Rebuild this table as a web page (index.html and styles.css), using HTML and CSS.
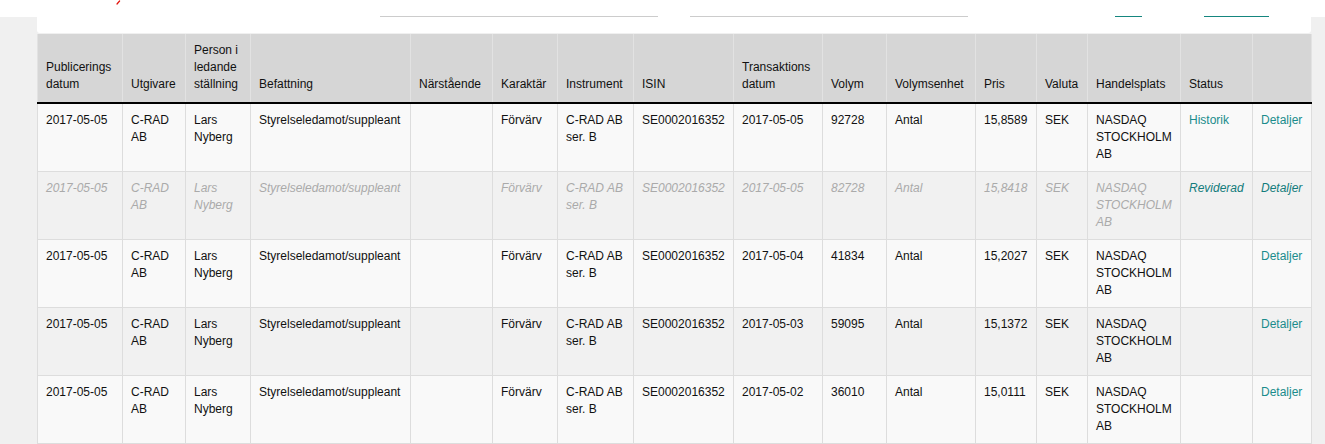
FILE: index.html
```html
<!DOCTYPE html>
<html lang="sv">
<head>
<meta charset="utf-8">
<title>Insynshandel</title>
<link rel="stylesheet" href="styles.css">
</head>
<body>
<div class="topbar">
  <svg class="logo-tick" width="5" height="5" viewBox="0 0 5 5"><path d="M1 4 L3.6 1" stroke="#e3120b" stroke-width="1.2" stroke-linecap="round"/></svg>
</div>
<main class="page">
  <div class="panel">
    <span class="field"></span>
    <span class="field field-2"></span>
    <span class="btn btn-small"></span>
    <span class="btn btn-wide"></span>
  </div>
  <table class="grid">
    <colgroup>
      <col class="c1"><col class="c2"><col class="c3"><col class="c4"><col class="c5"><col class="c6"><col class="c7"><col class="c8"><col class="c9"><col class="c10"><col class="c11"><col class="c12"><col class="c13"><col class="c14"><col class="c15"><col class="c16">
    </colgroup>
    <thead>
      <tr>
        <th>Publicerings datum</th>
        <th>Utgivare</th>
        <th>Person i ledande ställning</th>
        <th>Befattning</th>
        <th>Närstående</th>
        <th>Karaktär</th>
        <th>Instrument</th>
        <th>ISIN</th>
        <th>Transaktions datum</th>
        <th>Volym</th>
        <th>Volymsenhet</th>
        <th>Pris</th>
        <th>Valuta</th>
        <th>Handelsplats</th>
        <th>Status</th>
        <th></th>
      </tr>
    </thead>
    <tbody>
      <tr>
        <td>2017-05-05</td><td>C-RAD AB</td><td>Lars Nyberg</td><td>Styrelseledamot/suppleant</td><td></td><td>Förvärv</td><td>C-RAD AB ser. B</td><td>SE0002016352</td><td>2017-05-05</td><td>92728</td><td>Antal</td><td>15,8589</td><td>SEK</td><td>NASDAQ STOCKHOLM AB</td><td><a href="#">Historik</a></td><td><a href="#">Detaljer</a></td>
      </tr>
      <tr class="revised">
        <td>2017-05-05</td><td>C-RAD AB</td><td>Lars Nyberg</td><td>Styrelseledamot/suppleant</td><td></td><td>Förvärv</td><td>C-RAD AB ser. B</td><td>SE0002016352</td><td>2017-05-05</td><td>82728</td><td>Antal</td><td>15,8418</td><td>SEK</td><td>NASDAQ STOCKHOLM AB</td><td><a href="#">Reviderad</a></td><td><a href="#">Detaljer</a></td>
      </tr>
      <tr>
        <td>2017-05-05</td><td>C-RAD AB</td><td>Lars Nyberg</td><td>Styrelseledamot/suppleant</td><td></td><td>Förvärv</td><td>C-RAD AB ser. B</td><td>SE0002016352</td><td>2017-05-04</td><td>41834</td><td>Antal</td><td>15,2027</td><td>SEK</td><td>NASDAQ STOCKHOLM AB</td><td></td><td><a href="#">Detaljer</a></td>
      </tr>
      <tr>
        <td>2017-05-05</td><td>C-RAD AB</td><td>Lars Nyberg</td><td>Styrelseledamot/suppleant</td><td></td><td>Förvärv</td><td>C-RAD AB ser. B</td><td>SE0002016352</td><td>2017-05-03</td><td>59095</td><td>Antal</td><td>15,1372</td><td>SEK</td><td>NASDAQ STOCKHOLM AB</td><td></td><td><a href="#">Detaljer</a></td>
      </tr>
      <tr>
        <td>2017-05-05</td><td>C-RAD AB</td><td>Lars Nyberg</td><td>Styrelseledamot/suppleant</td><td></td><td>Förvärv</td><td>C-RAD AB ser. B</td><td>SE0002016352</td><td>2017-05-02</td><td>36010</td><td>Antal</td><td>15,0111</td><td>SEK</td><td>NASDAQ STOCKHOLM AB</td><td></td><td><a href="#">Detaljer</a></td>
      </tr>
    </tbody>
  </table>
</main>
</body>
</html>
```
FILE: styles.css
```css
html, body {
  margin: 0;
  padding: 0;
  background: #f0f0f0;
  font-family: "Liberation Sans", Arial, sans-serif;
  font-size: 12px;
  line-height: 17px;
  color: #111;
  overflow: hidden;
}

.topbar {
  height: 17px;
  background: #fff;
  display: flex;
  align-items: flex-start;
}

.logo-tick {
  display: block;
  margin-left: 116px;
}

.page {
  padding: 0 14px 0 37px;
}

.panel {
  width: 1274px;
  height: 17px;
  background: #fff;
  border-radius: 0 0 3px 3px;
  display: flex;
  align-items: flex-start;
  padding-left: 343px;
  box-sizing: border-box;
  margin-top: -1px;
}

.field {
  display: block;
  width: 278px;
  height: 0;
  border-bottom: 1px solid #cccccc;
}

.field-2 {
  margin-left: 32px;
}

.btn {
  display: block;
  height: 1px;
  background: #15867f;
}

.btn-small {
  width: 27px;
  margin-left: 147px;
}

.btn-wide {
  width: 65px;
  margin-left: 62px;
}

.grid {
  width: 1274px;
  table-layout: fixed;
  border-collapse: collapse;
  margin-top: 1px;
}

.c1 { width: 85px; }
.c2 { width: 63px; }
.c3 { width: 65px; }
.c4 { width: 160px; }
.c5 { width: 82px; }
.c6 { width: 65px; }
.c7 { width: 76px; }
.c8 { width: 100px; }
.c9 { width: 89px; }
.c10 { width: 64px; }
.c11 { width: 89px; }
.c12 { width: 61px; }
.c13 { width: 51px; }
.c14 { width: 93px; }
.c15 { width: 72px; }
.c16 { width: 59px; }

.grid th {
  background: #d6d6d6;
  font-weight: normal;
  text-align: left;
  vertical-align: bottom;
  padding: 8px 8px 9px;
  border-left: 1px solid #e2e2e2;
  border-right: 1px solid #e2e2e2;
  border-bottom: 2px solid #000;
  height: 51px;
}

.grid td {
  vertical-align: top;
  padding: 8px 8px;
  border: 1px solid #dddddd;
  height: 51px;
  word-wrap: break-word;
}

.grid tbody tr:nth-child(odd) td {
  background: #f9f9f9;
}

.grid tbody tr:nth-child(even) td {
  background: #f1f1f1;
}

.grid a {
  color: #1a8c8c;
  text-decoration: none;
}

.revised td {
  color: #aaaaaa;
  font-style: italic;
}

.revised a {
  color: #137c7c;
}
```
